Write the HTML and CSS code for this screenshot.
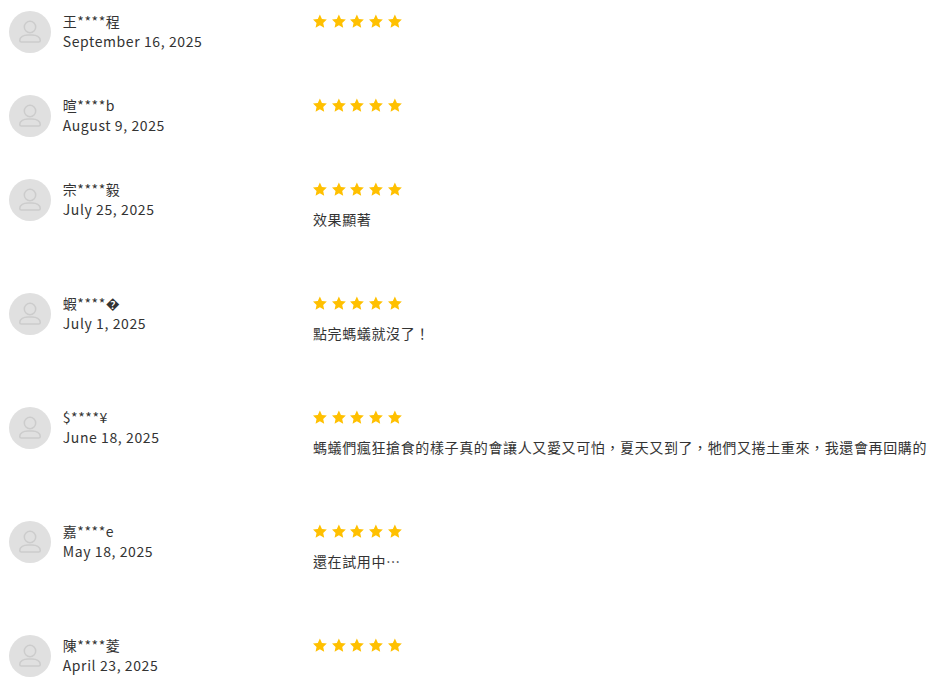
FILE: index.html

```html
<!DOCTYPE html>
<html lang="en">
<head>
  <meta charset="UTF-8" />
  <title>Reviews</title>
  <link rel="stylesheet" href="styles.css">
</head>
<body>
  <svg class="sprite" width="0" height="0">
    <symbol id="star" viewBox="1 0 24 24">
      <path d="M12 .8L15.290 7.970 23.130 8.880 17.330 14.230 18.880 21.970 12 18.100 5.120 21.970 6.670 14.230 .87 8.880 8.710 7.970z" />
    </symbol>
    <symbol id="user" viewBox="0 0 42 42">
      <circle cx="21" cy="16" r="5.700" />
      <path d="M10.750 29.500c0-3.500 4-5.500 8-5.500h4.500c4 0 8 2 8 5.500 0 1-.5 1.500-1.500 1.500H12.250c-1 0-1.500-.5-1.500-1.500z" />
    </symbol>
  </svg>

  <div class="reviews">
    <div class="review">
      <div class="author">
        <div class="avatar"><svg><use href="#user" /></svg></div>
        <div class="meta">
          <div>王****程</div>
          <div>September 16, 2025</div>
        </div>
      </div>
      <div class="content">
        <div class="stars"><svg><use href="#star" /></svg><svg><use href="#star" /></svg><svg><use href="#star" /></svg><svg><use href="#star" /></svg><svg><use href="#star" /></svg></div>
      </div>
    </div>

    <div class="review">
      <div class="author">
        <div class="avatar"><svg><use href="#user" /></svg></div>
        <div class="meta">
          <div>暄****b</div>
          <div>August 9, 2025</div>
        </div>
      </div>
      <div class="content">
        <div class="stars"><svg><use href="#star" /></svg><svg><use href="#star" /></svg><svg><use href="#star" /></svg><svg><use href="#star" /></svg><svg><use href="#star" /></svg></div>
      </div>
    </div>

    <div class="review">
      <div class="author">
        <div class="avatar"><svg><use href="#user" /></svg></div>
        <div class="meta">
          <div>宗****毅</div>
          <div>July 25, 2025</div>
        </div>
      </div>
      <div class="content">
        <div class="stars"><svg><use href="#star" /></svg><svg><use href="#star" /></svg><svg><use href="#star" /></svg><svg><use href="#star" /></svg><svg><use href="#star" /></svg></div>
        <p class="comment">效果顯著</p>
      </div>
    </div>

    <div class="review">
      <div class="author">
        <div class="avatar"><svg><use href="#user" /></svg></div>
        <div class="meta">
          <div>蝦****�</div>
          <div>July 1, 2025</div>
        </div>
      </div>
      <div class="content">
        <div class="stars"><svg><use href="#star" /></svg><svg><use href="#star" /></svg><svg><use href="#star" /></svg><svg><use href="#star" /></svg><svg><use href="#star" /></svg></div>
        <p class="comment">點完螞蟻就沒了！</p>
      </div>
    </div>

    <div class="review">
      <div class="author">
        <div class="avatar"><svg><use href="#user" /></svg></div>
        <div class="meta">
          <div>$****¥</div>
          <div>June 18, 2025</div>
        </div>
      </div>
      <div class="content">
        <div class="stars"><svg><use href="#star" /></svg><svg><use href="#star" /></svg><svg><use href="#star" /></svg><svg><use href="#star" /></svg><svg><use href="#star" /></svg></div>
        <p class="comment">螞蟻們瘋狂搶食的樣子真的會讓人又愛又可怕，夏天又到了，牠們又捲土重來，我還會再回購的</p>
      </div>
    </div>

    <div class="review">
      <div class="author">
        <div class="avatar"><svg><use href="#user" /></svg></div>
        <div class="meta">
          <div>嘉****e</div>
          <div>May 18, 2025</div>
        </div>
      </div>
      <div class="content">
        <div class="stars"><svg><use href="#star" /></svg><svg><use href="#star" /></svg><svg><use href="#star" /></svg><svg><use href="#star" /></svg><svg><use href="#star" /></svg></div>
        <p class="comment">還在試用中⋯</p>
      </div>
    </div>

    <div class="review">
      <div class="author">
        <div class="avatar"><svg><use href="#user" /></svg></div>
        <div class="meta">
          <div>陳****菱</div>
          <div>April 23, 2025</div>
        </div>
      </div>
      <div class="content">
        <div class="stars"><svg><use href="#star" /></svg><svg><use href="#star" /></svg><svg><use href="#star" /></svg><svg><use href="#star" /></svg><svg><use href="#star" /></svg></div>
      </div>
    </div>
  </div>
</body>
</html>
```

FILE: styles.css

```css
body {
  margin: 0;
  background: #fff;
  color: #333;
  font-family: "Noto Sans CJK TC", "Noto Sans", sans-serif;
  font-size: 14px;
  letter-spacing: 0.6px;
  overflow: hidden;
}

.sprite {
  display: block;
}

.review {
  display: flex;
  padding: 11px 0 31px 9px;
}

.author {
  display: flex;
  gap: 12px;
  width: 304px;
  flex-shrink: 0;
}

.avatar {
  width: 42px;
  height: 42px;
  border-radius: 50%;
  background: #e0e0e0;
}

.avatar svg {
  display: block;
  width: 42px;
  height: 42px;
  fill: none;
  stroke: #ccc;
  stroke-width: 1.5;
}

.meta {
  line-height: 20px;
  margin-left: -0.3px;
}

.stars {
  display: flex;
  gap: 3.67px;
  height: 20px;
  align-items: center;
}

.stars svg {
  width: 15px;
  height: 15px;
  fill: #ffc000;
}

.comment {
  margin: 10px 0 22px;
  line-height: 20px;
  letter-spacing: 0.62px;
  white-space: nowrap;
}
```
